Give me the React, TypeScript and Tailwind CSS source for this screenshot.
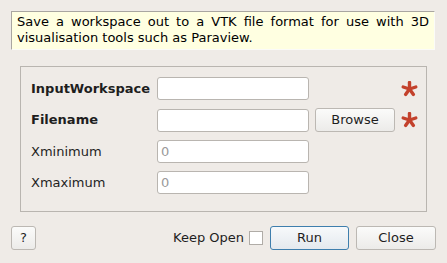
const font = { fontFamily: '"DejaVu Sans", Verdana, sans-serif' };

function Star() {
  return (
    <svg width="17" height="16" viewBox="-8.5 -8 17 16" className="block">
      <g stroke="#c3412c" strokeWidth="3.4" strokeLinecap="round">
        <line x1="0" y1="0" x2="0" y2="-6.5" />
        <line x1="0" y1="0" x2="6.3" y2="-2" />
        <line x1="0" y1="0" x2="-6.3" y2="-2" />
        <line x1="0" y1="0" x2="3.9" y2="5.4" />
        <line x1="0" y1="0" x2="-3.9" y2="5.4" />
      </g>
    </svg>
  );
}

function Field({ placeholder }: { placeholder?: string }) {
  return (
    <input
      type="text"
      placeholder={placeholder}
      className="h-[23px] w-[152px] rounded-[3px] border border-[#b9b5b0] bg-white px-[3px] text-[13px] text-black outline-none placeholder:text-[#9a9a9a]"
      style={font}
    />
  );
}

function Btn({ label, w, primary }: { label: string; w: string; primary?: boolean }) {
  return (
    <button
      className={
        primary
          ? 'h-[24px] rounded-[3px] border border-[#3e7ead] bg-gradient-to-b from-[#f7f9fb] to-[#e4e9ee] text-[13px] text-[#1e1e1e] ' + w
          : 'h-[24px] rounded-[3px] border border-[#bcb8b3] bg-gradient-to-b from-[#fbfbfa] to-[#ecebe9] text-[13px] text-[#1e1e1e] ' + w
      }
      style={font}
    >
      {label}
    </button>
  );
}

export default function App() {
  return (
    <div className="flex h-[263px] w-[447px] flex-col bg-[#efebe7] text-[13px] text-[#1e1e1e]" style={font}>
      <div className="ml-[11px] mr-[12px] mt-[11px] h-[39px] border-l border-t border-[#a9a6a1] border-b-[#fbfbf8] border-r-[#fbfbf8] border-b border-r bg-[#ffffe1] px-[5px] pt-[2px] text-justify leading-[16px] text-black">
        Save a workspace out to a VTK file format for use with 3D visualisation tools such as Paraview.
      </div>

      <div className="mx-[20px] mt-[16px] h-[146px] border border-[#b9b5b0] pl-[10px] pt-[10px]">
        <div className="grid grid-cols-[126px_152px_92px_17px] items-center gap-y-[8px]">
          <span className="font-bold">InputWorkspace</span>
          <Field />
          <span />
          <Star />

          <span className="font-bold">Filename</span>
          <Field />
          <div className="pl-[6px]">
            <Btn label="Browse" w="w-[80px]" />
          </div>
          <Star />

          <span>Xminimum</span>
          <Field placeholder="0" />
          <span />
          <span />

          <span>Xmaximum</span>
          <Field placeholder="0" />
          <span />
          <span />
        </div>
      </div>

      <div className="mt-[14px] flex items-center pl-[11px] pr-[11px]">
        <Btn label="?" w="w-[25px]" />
        <div className="flex-1" />
        <span className="mr-[5px]">Keep Open</span>
        <span className="mr-[7px] h-[14px] w-[14px] border border-[#b0aca7] bg-white" />
        <Btn label="Run" w="w-[79px]" primary />
        <div className="w-[7px]" />
        <Btn label="Close" w="w-[80px]" />
      </div>
    </div>
  );
}
